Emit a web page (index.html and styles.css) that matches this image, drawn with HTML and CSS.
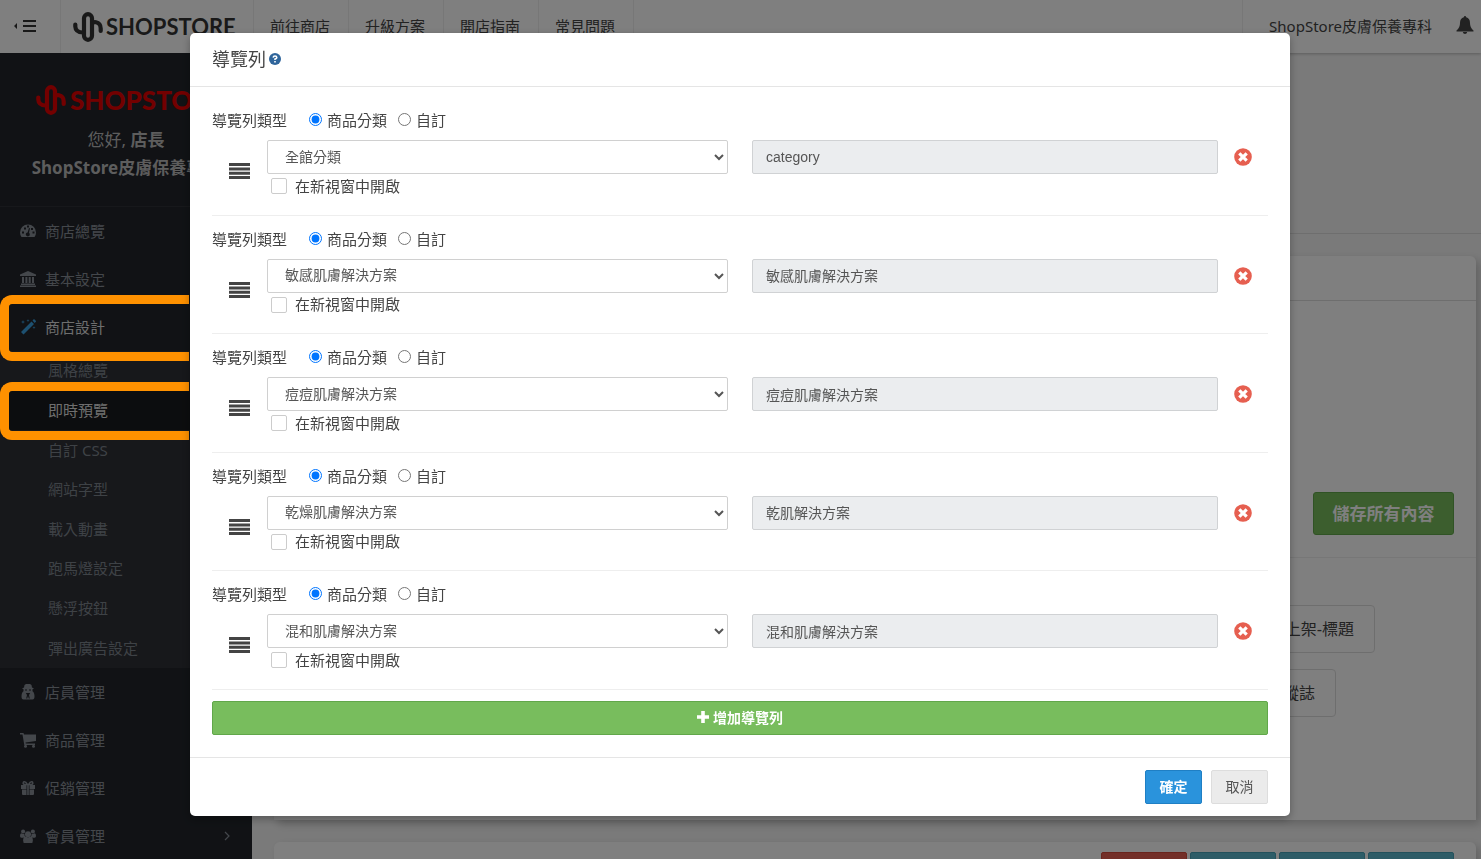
FILE: index.html
```html
<!DOCTYPE html>
<html lang="zh-Hant">
<head>
<meta charset="utf-8">
<title>ShopStore</title>
<link rel="stylesheet" href="styles.css">
</head>
<body>
<svg class="sprite" aria-hidden="true">
  <symbol id="i-logo" viewBox="0 0 30 30"><g fill="none" stroke="currentColor" stroke-width="4.200"><rect x="11" y="2.200" width="8" height="25.600" rx="4"/><path d="M2.300 12.500v2q.2 5.800 7.700 6" stroke-linecap="round"/><path d="M20 10.500q1.500-.5 3-.2 4.600 1 4.700 6.200v2.500" stroke-linecap="round"/></g></symbol>
  <symbol id="i-bars" viewBox="0 0 21 16"><path d="M0 0h21v3H0zM0 4.400h21v3H0zM0 8.800h21v3H0zM0 13h21v3H0z" fill="currentColor"/></symbol>
  <symbol id="i-times" viewBox="0 0 18 18"><circle cx="9" cy="9" r="8.800" fill="#e65f50"/><path d="M5.300 5.300l7.400 7.400M12.700 5.300l-7.400 7.400" stroke="#fff" stroke-width="3.200"/></symbol>
  <symbol id="i-dash" viewBox="0 0 16 16"><path fill="currentColor" fill-rule="evenodd" d="M1.500 14Q0 12 0 9.500a8 8 0 0 1 16 0q0 2.500-1.500 4.500zM2 8.500h2v2H2zm2-4h2v2H4zm3-2h2v2H7zm3-2h0zM9 5l1 .3-1 4.500a2 2 0 1 1-1.400-.4zM11 5h2v2h-2zm1.500 3.500h2v2h-2z"/></symbol>
  <symbol id="i-bank" viewBox="0 0 16 16"><path fill="currentColor" d="M8 0l8 3.500V5H0V3.500zM2 6h2v6H2zm3.400 0h2v6h-2zm3.300 0h2v6h-2zM12 6h2v6h-2zM1 12.500h14V14H1zM0 14.500h16V16H0z"/></symbol>
  <symbol id="i-wand" viewBox="0 0 16 16"><path fill="currentColor" d="M11.500 2.500l2.500 2.500L3.500 15.500 1 13zM12.500 1.500L14 0l2.300 2.300L14.700 4zM3 1l.5 1.500L5 3l-1.500.5L3 5l-.5-1.500L1 3l1.500-.5zM8 0l.4 1.200 1.200.4-1.200.4L8 3.200 7.600 2l-1.200-.4 1.200-.4zM14 7l.4 1.200 1.200.4-1.200.4L14 10.200 13.600 9l-1.200-.4 1.200-.4z"/></symbol>
  <symbol id="i-agent" viewBox="0 0 16 16"><path fill="currentColor" fill-rule="evenodd" d="M6 0h4l1.500 1 .5 2.500 2 1-1.500.8v2q2 1.200 2 5.200 0 3-2 3h-9q-2 0-2-3 0-4 2-5.200v-2L2 4.500l2-1L4.500 1zM5.800 9l1.200 2-.8 3.500h1L8 12l.8 2.500h1L9 11l1.200-2H8zM5 5.500h2v1H5zm4 0h2v1H9z"/></symbol>
  <symbol id="i-cart" viewBox="0 0 16 16"><path fill="currentColor" d="M0 1h3.500l.5 1.500h12V9l-10.500 1.400.3 1.100H15V13H4.300L2.500 2.500H0z"/><circle cx="5.500" cy="14.300" r="1.500" fill="currentColor"/><circle cx="13.500" cy="14.300" r="1.500" fill="currentColor"/></symbol>
  <symbol id="i-gift" viewBox="0 0 16 16"><path fill="currentColor" d="M1 5h5.500v4H1zM9.500 5H15v4H9.500zM2 9.500h4.500V15H3q-1 0-1-1zM9.500 9.500H14V14q0 1-1 1H9.500zM7.200 5h1.600v10H7.200z"/><path d="M7.500 4.500h-3Q2.500 4 3.500 2q2-1 4 2.500h1q2-3.500 4-2.500 1 2-1 2.500z" fill="none" stroke="currentColor" stroke-width="1.500"/></symbol>
  <symbol id="i-users" viewBox="0 0 18 16"><g fill="currentColor"><circle cx="9" cy="6" r="3.400"/><circle cx="3.500" cy="3" r="2.300"/><circle cx="14.500" cy="3" r="2.300"/><path d="M3.500 13q0-4 3-4.300 2.500 1.800 5 0 3 .3 3 4.300 0 3-2 3h-7q-2 0-2-3zM0 8q0-3 1.500-3Q3.500 6 5 5.500q-.3 2 .8 3.200L3.500 10H1.500Q0 10 0 8zM18 8q0-3-1.500-3-2 1-3.500.5.300 2-.8 3.200L14.500 10h2Q18 10 18 8z"/></g></symbol>
  <symbol id="i-bell" viewBox="0 0 18 18"><path fill="currentColor" d="M9 0q1 0 1.200 1.300Q14 2.300 14 7q0 5 3.500 7.500v1H.5v-1Q4 12 4 7q0-4.700 3.800-5.700Q8 0 9 0zM6.800 16h4.400q-.4 2-2.200 2t-2.200-2z"/></symbol>
</svg>

<div class="app">
  <header class="topbar">
    <button class="toggle" type="button" aria-label="選單"><svg width="22" height="12" viewBox="0 0 22 12"><path d="M3 3v6L0 6zM9 0h13v2H9zM9 5h13v2H9zM9 10h13v2H9z" fill="currentColor"/></svg></button>
    <a class="brand" href="#"><svg class="brand-mark"><use href="#i-logo"/></svg><span>SHOPSTORE</span></a>
    <nav class="topnav">
      <a href="#">前往商店</a><a href="#">升級方案</a><a href="#">開店指南</a><a href="#">常見問題</a>
    </nav>
    <a class="account" href="#">ShopStore皮膚保養專科</a>
    <button class="bell" type="button" aria-label="通知"><svg><use href="#i-bell"/></svg></button>
  </header>

  <div class="layout">
    <aside class="sidebar">
      <div class="profile">
        <div class="red-logo"><svg class="brand-mark"><use href="#i-logo"/></svg><span>SHOPSTORE</span></div>
        <p>您好, <strong>店長</strong></p>
        <p><strong>ShopStore皮膚保養專科</strong></p>
      </div>
      <nav class="menu">
        <a href="#"><svg><use href="#i-dash"/></svg>商店總覽</a>
        <a href="#"><svg><use href="#i-bank"/></svg>基本設定</a>
        <a class="current" href="#"><svg><use href="#i-wand"/></svg>商店設計</a>
        <div class="submenu">
          <a href="#">風格總覽</a>
          <a class="active" href="#">即時預覽</a>
          <a href="#">自訂 CSS</a>
          <a href="#">網站字型</a>
          <a href="#">載入動畫</a>
          <a href="#">跑馬燈設定</a>
          <a href="#">懸浮按鈕</a>
          <a href="#">彈出廣告設定</a>
        </div>
        <a href="#"><svg><use href="#i-agent"/></svg>店員管理</a>
        <a href="#"><svg><use href="#i-cart"/></svg>商品管理</a>
        <a href="#"><svg><use href="#i-gift"/></svg>促銷管理</a>
        <a href="#"><svg><use href="#i-users"/></svg>會員管理<svg class="chev" viewBox="0 0 6 10"><path d="M1 1l4 4-4 4" fill="none" stroke="currentColor" stroke-width="1.200"/></svg></a>
      </nav>
    </aside>

    <main class="main">
      <div class="hero"></div>
      <section class="card">
        <div class="card-head"></div>
        <div class="card-save"><button type="button" class="save">儲存所有內容</button></div>
        <div class="tags">
          <button type="button" class="tag first">上架-標題</button>
          <button type="button" class="tag second">蹤誌</button>
        </div>
      </section>
      <section class="card actions">
        <span class="chip red"></span><span class="chip"></span><span class="chip"></span><span class="chip"></span>
      </section>
    </main>
  </div>
</div>

<div class="overlay">
  <div class="mark mark-design"></div>
  <div class="mark mark-preview"></div>
  <form class="modal" role="dialog" aria-labelledby="dlg-title">
    <header class="modal-head">
      <h1 id="dlg-title">導覽列</h1>
      <svg class="help" viewBox="0 0 12 12"><circle cx="6" cy="6" r="6" fill="#2f659b"/><path d="M4.200 4.600Q4.300 3 6 3t1.800 1.500Q7.800 5.500 6 6.100v1" fill="none" stroke="#fff" stroke-width="1.600"/><path d="M5.200 8h1.600v1.500H5.200z" fill="#fff"/></svg>
    </header>
    <div class="modal-body">
      <div class="rows">
        <div class="row">
          <div class="types"><span class="type-title">導覽列類型</span>
            <input type="radio" name="t1" id="t1a" checked><label for="t1a">商品分類</label>
            <input type="radio" name="t1" id="t1b"><label for="t1b">自訂</label></div>
          <div class="fields">
            <svg class="drag"><use href="#i-bars"/></svg>
            <div class="pick"><select aria-label="分類"><option>全館分類</option></select>
              <div class="blank"><input type="checkbox" id="c1"><label for="c1">在新視窗中開啟</label></div></div>
            <input class="value" type="text" aria-label="名稱" value="category" disabled>
            <button class="remove" type="button" aria-label="刪除"><svg><use href="#i-times"/></svg></button>
          </div>
        </div>
        <div class="row">
          <div class="types"><span class="type-title">導覽列類型</span>
            <input type="radio" name="t2" id="t2a" checked><label for="t2a">商品分類</label>
            <input type="radio" name="t2" id="t2b"><label for="t2b">自訂</label></div>
          <div class="fields">
            <svg class="drag"><use href="#i-bars"/></svg>
            <div class="pick"><select aria-label="分類"><option>敏感肌膚解決方案</option></select>
              <div class="blank"><input type="checkbox" id="c2"><label for="c2">在新視窗中開啟</label></div></div>
            <input class="value" type="text" aria-label="名稱" value="敏感肌膚解決方案" disabled>
            <button class="remove" type="button" aria-label="刪除"><svg><use href="#i-times"/></svg></button>
          </div>
        </div>
        <div class="row">
          <div class="types"><span class="type-title">導覽列類型</span>
            <input type="radio" name="t3" id="t3a" checked><label for="t3a">商品分類</label>
            <input type="radio" name="t3" id="t3b"><label for="t3b">自訂</label></div>
          <div class="fields">
            <svg class="drag"><use href="#i-bars"/></svg>
            <div class="pick"><select aria-label="分類"><option>痘痘肌膚解決方案</option></select>
              <div class="blank"><input type="checkbox" id="c3"><label for="c3">在新視窗中開啟</label></div></div>
            <input class="value" type="text" aria-label="名稱" value="痘痘肌膚解決方案" disabled>
            <button class="remove" type="button" aria-label="刪除"><svg><use href="#i-times"/></svg></button>
          </div>
        </div>
        <div class="row">
          <div class="types"><span class="type-title">導覽列類型</span>
            <input type="radio" name="t4" id="t4a" checked><label for="t4a">商品分類</label>
            <input type="radio" name="t4" id="t4b"><label for="t4b">自訂</label></div>
          <div class="fields">
            <svg class="drag"><use href="#i-bars"/></svg>
            <div class="pick"><select aria-label="分類"><option>乾燥肌膚解決方案</option></select>
              <div class="blank"><input type="checkbox" id="c4"><label for="c4">在新視窗中開啟</label></div></div>
            <input class="value" type="text" aria-label="名稱" value="乾肌解決方案" disabled>
            <button class="remove" type="button" aria-label="刪除"><svg><use href="#i-times"/></svg></button>
          </div>
        </div>
        <div class="row">
          <div class="types"><span class="type-title">導覽列類型</span>
            <input type="radio" name="t5" id="t5a" checked><label for="t5a">商品分類</label>
            <input type="radio" name="t5" id="t5b"><label for="t5b">自訂</label></div>
          <div class="fields">
            <svg class="drag"><use href="#i-bars"/></svg>
            <div class="pick"><select aria-label="分類"><option>混和肌膚解決方案</option></select>
              <div class="blank"><input type="checkbox" id="c5"><label for="c5">在新視窗中開啟</label></div></div>
            <input class="value" type="text" aria-label="名稱" value="混和肌膚解決方案" disabled>
            <button class="remove" type="button" aria-label="刪除"><svg><use href="#i-times"/></svg></button>
          </div>
        </div>
      </div>
      <button class="btn add" type="button"><svg width="12" height="12" viewBox="0 0 12 12"><path d="M6 0v12M0 6h12" stroke="#fff" stroke-width="3.600"/></svg>增加導覽列</button>
    </div>
    <footer class="modal-foot">
      <button class="btn ok" type="button">確定</button>
      <button class="btn cancel" type="button">取消</button>
    </footer>
  </form>
</div>
</body>
</html>
```

FILE: styles.css
```css
* { box-sizing: border-box; }

body {
  margin: 0;
  overflow: hidden;
  font-family: "Noto Sans", "Noto Sans CJK TC", sans-serif;
  font-size: 15px;
  color: #444;
}

a { color: inherit; text-decoration: none; }
button, input, select { font-family: "Liberation Sans", "Noto Sans CJK TC", sans-serif; font-size: 14px; margin: 0; }
button { cursor: pointer; padding: 0; }
.sprite { display: none; }

.app { height: 100vh; overflow: hidden; display: flex; flex-direction: column; }

/* Top bar */
.topbar {
  display: flex;
  flex: none;
  position: relative;
  height: 53px;
  background: #fff;
  color: #444;
  box-shadow: 0 1px 3px rgba(0, 0, 0, .25);
}
.toggle {
  width: 61px;
  padding-right: 10px;
  border: 0;
  border-right: 1px solid #eee;
  background: none;
  color: #333;
}
.brand {
  display: flex;
  align-items: center;
  gap: 3px;
  width: 193px;
  padding-left: 12px;
  border-right: 1px solid #eee;
  color: #333;
  font: bold 22px Lato, sans-serif;
}
.brand-mark { width: 30px; height: 30px; flex: none; }
.topnav { display: flex; }
.topnav a { padding: 0 18px 0 16px; border-right: 1px solid #eee; line-height: 52px; }
.account { margin-left: auto; padding: 0 24px 0 26px; border-left: 1px solid #eee; line-height: 52px; }
.bell { width: 25px; border: 0; background: none; color: #444; text-align: left; }
.bell svg { width: 18px; height: 18px; }

/* Page columns */
.layout { display: flex; flex: 1; min-height: 0; }

.sidebar { flex: none; width: 252px; overflow: hidden; background: #22252b; color: #888e97; position: relative; }
.profile {
  height: 154px;
  padding-top: 31px;
  border-bottom: 1px solid #2f3136;
  text-align: center;
  font-size: 17px;
  color: #bbb;
}
.profile p { margin: 0; line-height: 28px; white-space: nowrap; }
.red-logo {
  display: flex;
  align-items: center;
  gap: 4px;
  height: 32px;
  margin-bottom: 10px;
  padding-left: 36px;
  color: #e60000;
  font: 900 26px Lato, sans-serif;
}
.menu > a { display: flex; align-items: center; height: 48px; padding: 0 22px 2px 20px; }
.menu > a svg { width: 16px; height: 16px; margin: 2px 9px 0 0; }
.menu > a .chev { width: 6px; height: 10px; margin: 2px 0 0 auto; }
.menu > .current { color: #ddd; }
.menu > .current svg { color: #3aa0e0; }
.submenu { display: grid; grid-auto-rows: 1fr; min-height: 317px; background: #2e3036; }
.submenu a { display: flex; align-items: center; padding: 0 0 2px 48px; color: #7d848d; }
.submenu .active { background: #191b1e; color: #ddd; }

.main { flex: 1; min-width: 0; padding-right: 5px; background: #f5f5f5; }
.hero { height: 181px; margin-right: -5px; border-bottom: 1px solid #ddd; }
.card {
  margin: 22px 0 22px 22px;
  background: #fff;
  border-radius: 6px 6px 0 0;
  box-shadow: 4px 4px 10px rgba(0, 0, 0, .2);
}
.card-head { height: 45px; border-bottom: 1px solid #ddd; }
.card-save { padding: 191px 22px 22px; border-bottom: 1px solid #eee; text-align: right; }
.save {
  width: 141px;
  height: 43px;
  padding-bottom: 3px;
  border: 1px solid #61a74a;
  border-radius: 3px;
  background: #78bd5d;
  color: #fff;
  font-size: 17px;
  font-weight: bold;
}
.tags { display: flex; flex-direction: column; align-items: flex-end; gap: 16px; height: 262px; padding-top: 47px; }
.tag { height: 48px; padding: 0 20px 3px; border: 1px solid #ddd; border-radius: 4px; background: #fff; color: #444; font-size: 16px; }
.first { margin-right: 101px; }
.second { margin-right: 140px; }
.actions { display: flex; justify-content: flex-end; gap: 3px; height: 60px; padding: 10px 22px; }
.chip { width: 86px; height: 34px; border: 1px solid #46a2b8; border-radius: 2px; background: #5bb9cf; }
.chip.red { border-color: #d34a3c; background: #e65f50; }

/* Dialog */
.overlay { position: fixed; inset: 0; background: rgba(0, 0, 0, .5); }
.mark { position: absolute; left: 0; width: 189px; border: 9px solid #ff9100; border-right: 0; border-radius: 12px 0 0 12px; }
.mark-design { top: 295px; height: 66px; }
.mark-preview { top: 382px; height: 58px; }

.modal {
  position: relative;
  margin: 33px 191px 0 190px;
  background: #fff;
  border-radius: 5px;
  box-shadow: 0 3px 9px rgba(0, 0, 0, .3);
}
.modal-head { display: flex; align-items: center; gap: 3px; height: 54px; padding: 0 22px 2px; border-bottom: 1px solid #e5e5e5; }
.modal-head h1 { margin: 0; padding-bottom: 2px; font-size: 18px; font-weight: 400; }
.help { width: 12px; height: 12px; }
.modal-body { padding: 10px 22px 22px; }

.rows { display: grid; grid-auto-rows: 1fr; min-height: 593px; margin-bottom: 11px; }
.row { padding-top: 13px; border-bottom: 1px solid #eee; }
.types { display: flex; align-items: center; height: 21px; margin-bottom: 9px; line-height: 21px; }
.type-title { width: 97px; }
.types input { width: 13px; height: 13px; margin: 0 5px 2px 0; }
.types label { margin-right: 11px; }
.fields { display: grid; grid-template-columns: 55px 461fr 24px 466fr 50px; align-items: start; }
.drag { width: 21px; height: 16px; margin: 23px 0 0 17px; color: #444; }
.pick select {
  display: block;
  width: 100%;
  height: 34px;
  padding: 0 14px 1px 13px;
  border: 1px solid #d0d0d0;
  border-radius: 2px;
  background: #fff;
  color: #555;
}
.blank { display: flex; align-items: center; gap: 8px; height: 24px; padding-left: 4px; }
.blank label { padding-bottom: 2px; }
.blank input { appearance: none; width: 16px; height: 16px; border: 1px solid #ccc; border-radius: 2px; background: #fff; }
.value {
  grid-column: 4;
  width: 100%;
  height: 34px;
  padding: 0 13px 1px;
  border: 1px solid #d0d2d4;
  border-radius: 2px;
  background: #ebedef;
  color: #555;
}
.remove { display: flex; align-items: center; justify-content: center; height: 34px; border: 0; background: none; }
.remove svg { width: 18px; height: 18px; }

.btn { height: 34px; padding-bottom: 2px; border: 1px solid; border-radius: 2px; color: #fff; font-weight: bold; }
.add { display: flex; align-items: center; justify-content: center; gap: 4px; width: 100%; border-color: #61a74a; background: #78bd5d; }
.modal-foot { display: flex; justify-content: flex-end; gap: 9px; padding: 12px 22px; border-top: 1px solid #e5e5e5; }
.modal-foot .btn { width: 57px; }
.ok { border-color: #1f7fc4; background: #2a93dc; }
.cancel { border-color: #ddd; background: #ebebeb; color: #555; font-weight: 400; }
```
